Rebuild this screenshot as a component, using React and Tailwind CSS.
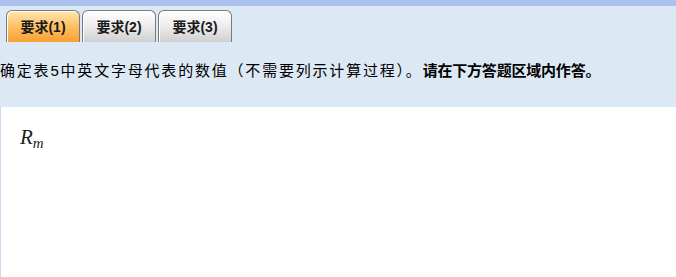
import React from 'react';

const tabs = ['要求(1)', '要求(2)', '要求(3)'];

function Tab({ label, active }) {
  return (
    <div
      className={
        'flex h-[32px] w-[74px] items-center justify-center rounded-t-[6px] border border-b-0 border-[#7a7a7a] shadow-[inset_1px_1px_0_#ffffff] ' +
        (active
          ? 'bg-gradient-to-b from-[#ffe6b0] via-[#ffc060] to-[#f7a030]'
          : 'bg-gradient-to-b from-[#ffffff] via-[#ececec] to-[#cfcfcf]')
      }
    >
      <span className="text-[14px] font-bold leading-none text-[#1a1a1a]">{label}</span>
    </div>
  );
}

export default function App() {
  return (
    <div
      className="flex h-[277px] w-[676px] flex-col bg-white"
      style={{ fontFamily: '"Liberation Sans", "Noto Sans CJK SC", sans-serif' }}
    >
      {/* 顶部色条 */}
      <div className="h-[6px] bg-[#abc2ef]" />

      {/* 题目区 */}
      <div className="flex h-[101px] flex-col bg-[#dde8f5] pt-[4px]">
        <div className="flex gap-[2px] pl-[6px]">
          {tabs.map((t, i) => (
            <Tab key={t} label={t} active={i === 0} />
          ))}
        </div>
        <p className="mt-[19px] whitespace-nowrap text-[15px] leading-[20px] text-black">
          <span className="tracking-[1.8px]">确定表5中英文字母代表的数值（不需要列示计算过程）。</span>
          <b className="font-bold tracking-[-0.2px]">请在下方答题区域内作答。</b>
        </p>
      </div>

      {/* 答题区 */}
      <div className="flex-1 border-l border-[#c9d9ef] pl-[19px] pt-[15px]">
        <span
          className="text-[21px] italic text-[#222]"
          style={{ fontFamily: '"Liberation Serif", serif' }}
        >
          R<sub className="text-[15px]">m</sub>
        </span>
      </div>
    </div>
  );
}
